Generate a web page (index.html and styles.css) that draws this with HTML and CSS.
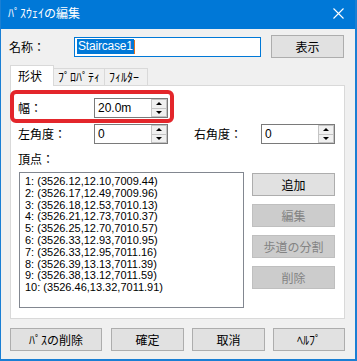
FILE: index.html
```html
<!DOCTYPE html>
<html lang="ja">
<head>
  <meta charset="UTF-8">
  <title>ﾊﾟｽｳｪｲの編集</title>
  <link rel="stylesheet" href="styles.css">
</head>
<body>
  <div class="window">
    <div class="titlebar">
      <span class="title">ﾊﾟｽｳｪｲの編集</span>
      <svg class="close" width="11" height="11" viewBox="0 0 11 11">
        <path d="M0.5 0.5 L10.5 10.5 M10.5 0.5 L0.5 10.5" stroke="#fff" stroke-width="1.1"/>
      </svg>
    </div>

    <div class="namerow">
      <span class="namelabel">名称：</span>
      <div class="textbox"><span class="sel">Staircase1</span><span class="caret"></span></div>
      <button class="btn showbtn">表示</button>
    </div>

    <div class="tabs">
      <div class="tab active">形状</div>
      <div class="tab">ﾌﾟﾛﾊﾟﾃｨ</div>
      <div class="tab">ﾌｨﾙﾀｰ</div>
    </div>

    <div class="panel">
      <div class="highlight"></div>

      <div class="row">
        <span class="label">幅：</span>
        <div class="spin">
          <span class="val">20.0m</span>
          <div class="arrows">
            <div class="arr up"></div>
            <div class="arr down"></div>
          </div>
        </div>
      </div>

      <div class="row row2">
        <span class="label">左角度：</span>
        <div class="spin">
          <span class="val">0</span>
          <div class="arrows">
            <div class="arr up"></div>
            <div class="arr down"></div>
          </div>
        </div>
        <span class="label rlabel">右角度：</span>
        <div class="spin">
          <span class="val">0</span>
          <div class="arrows">
            <div class="arr up"></div>
            <div class="arr down"></div>
          </div>
        </div>
      </div>

      <div class="vlabel">頂点：</div>

      <div class="listarea">
        <div class="list">
          <div>1: (3526.12,12.10,7009.44)</div>
          <div>2: (3526.17,12.49,7009.96)</div>
          <div>3: (3526.18,12.53,7010.13)</div>
          <div>4: (3526.21,12.73,7010.37)</div>
          <div>5: (3526.25,12.70,7010.57)</div>
          <div>6: (3526.33,12.93,7010.95)</div>
          <div>7: (3526.33,12.95,7011.16)</div>
          <div>8: (3526.39,13.13,7011.39)</div>
          <div>9: (3526.38,13.12,7011.59)</div>
          <div>10: (3526.46,13.32,7011.91)</div>
        </div>
        <div class="sidebtns">
          <button class="btn">追加</button>
          <button class="btn disabled">編集</button>
          <button class="btn disabled">歩道の分割</button>
          <button class="btn disabled">削除</button>
        </div>
      </div>
    </div>

    <div class="bottom">
      <button class="btn b-del">ﾊﾟｽの削除</button>
      <button class="btn b-ok">確定</button>
      <button class="btn b-cancel">取消</button>
      <button class="btn b-help">ﾍﾙﾌﾟ</button>
    </div>
  </div>
</body>
</html>
```

FILE: styles.css
```css
html, body {
  margin: 0;
  padding: 0;
}
body {
  font-family: "Noto Sans CJK JP", "Liberation Sans", sans-serif;
  font-size: 12px;
  color: #000;
  background: #f0f0f0;
}
.window {
  width: 357px;
  height: 361px;
  box-sizing: border-box;
  background: #f0f0f0;
  border-left: 1px solid #1a7fd4;
  border-right: 2px solid #1a7fd4;
  border-bottom: 2px solid #1a7fd4;
}
.titlebar {
  height: 29px;
  background: #0078d7;
  color: #fff;
  display: flex;
  align-items: center;
  justify-content: space-between;
  padding-left: 7px;
  padding-right: 11px;
  line-height: 14px;
}
.title {
  margin-top: -3px;
}
.close {
  margin-top: -3px;
}
.namerow {
  margin-top: 6px;
  padding-left: 8px;
  height: 23px;
  display: flex;
  align-items: center;
}
.namelabel {
  width: 65px;
  line-height: 14px;
}
.textbox {
  width: 187px;
  height: 20px;
  box-sizing: border-box;
  border: 1px solid #0078d7;
  background: #fff;
  display: flex;
  align-items: center;
  padding-left: 2px;
}
.sel {
  font-family: "Liberation Sans", sans-serif;
  font-size: 12px;
  letter-spacing: -0.2px;
  background: #0078d7;
  color: #fff;
  line-height: 15px;
  padding: 0 1px;
}
.caret {
  width: 1px;
  height: 14px;
  background: #e07020;
}
.btn {
  font-family: "Noto Sans CJK JP", sans-serif;
  font-size: 12px;
  line-height: 14px;
  color: #000;
  background: #e1e1e1;
  border: 1px solid #adadad;
  height: 23px;
  padding: 0;
  box-sizing: border-box;
  margin: 0;
}
.btn.disabled {
  background: #cccccc;
  border-color: #bfbfbf;
  color: #838383;
}
.showbtn {
  width: 73px;
  margin-left: 10px;
}
.tabs {
  margin-top: 7px;
  margin-left: 9px;
  display: flex;
  align-items: flex-end;
  height: 20px;
  position: relative;
  z-index: 1;
}
.tab {
  height: 17px;
  box-sizing: border-box;
  border: 1px solid #d9d9d9;
  border-left: none;
  border-bottom: none;
  padding: 0 4px;
  line-height: 15px;
  font-size: 12px;
  background: #f0f0f0;
}
.tab.active {
  height: 21px;
  margin-bottom: -1px;
  width: 44px;
  border-left: 1px solid #d9d9d9;
  background: #fff;
  padding-left: 7px;
  line-height: 19px;
}
.tab:nth-child(2) {
  width: 51px;
}
.tab:nth-child(3) {
  width: 43px;
}
.panel {
  position: relative;
  margin-left: 9px;
  width: 335px;
  height: 234px;
  box-sizing: border-box;
  border: 1px solid #d9d9d9;
  background: #fff;
  padding: 12px 0 0 7px;
}
.highlight {
  position: absolute;
  left: -1px;
  top: 4px;
  width: 164px;
  height: 33px;
  box-sizing: border-box;
  border: 4px solid #e3262b;
  border-radius: 6px;
}
.row {
  display: flex;
  align-items: center;
  height: 20px;
}
.row2 {
  margin-top: 6px;
}
.label {
  width: 76px;
  line-height: 14px;
}
.rlabel {
  width: 67px;
  margin-left: 26px;
}
.spin {
  width: 74px;
  height: 20px;
  box-sizing: border-box;
  border: 1px solid #7a7a7a;
  background: #fff;
  display: flex;
  align-items: center;
  justify-content: space-between;
}
.val {
  font-family: "Liberation Sans", sans-serif;
  font-size: 12px;
  padding-left: 3px;
}
.arrows {
  width: 16px;
  height: 18px;
  display: flex;
  flex-direction: column;
  margin-right: 0;
}
.arr {
  flex: 1;
  box-sizing: border-box;
  border: 1px solid #c4c4c4;
  background: #f0f0f0;
  display: flex;
  align-items: center;
  justify-content: center;
}
.arr.up {
  border-bottom: none;
}
.arr::after {
  content: "";
  width: 0;
  height: 0;
  border-left: 3px solid transparent;
  border-right: 3px solid transparent;
}
.arr.up::after {
  border-bottom: 3px solid #000;
}
.arr.down::after {
  border-top: 3px solid #000;
}
.vlabel {
  margin-top: 8px;
  line-height: 14px;
}
.listarea {
  margin-top: 6px;
  display: flex;
}
.list {
  margin-left: 1px;
  width: 225px;
  height: 136px;
  box-sizing: border-box;
  border: 1px solid #828790;
  padding: 3px 0 0 5px;
  font-family: "Liberation Sans", sans-serif;
  font-size: 11px;
  letter-spacing: 0;
  line-height: 11.8px;
}
.sidebtns {
  margin-left: 8px;
  margin-top: 1px;
  width: 83px;
  display: flex;
  flex-direction: column;
  gap: 8px;
}
.bottom {
  margin-top: 9px;
  margin-left: 9px;
  display: flex;
}
.b-del {
  width: 92px;
}
.b-ok {
  width: 73px;
  margin-left: 9px;
}
.b-cancel {
  width: 73px;
  margin-left: 8px;
}
.b-help {
  width: 72px;
  margin-left: 8px;
}
```
